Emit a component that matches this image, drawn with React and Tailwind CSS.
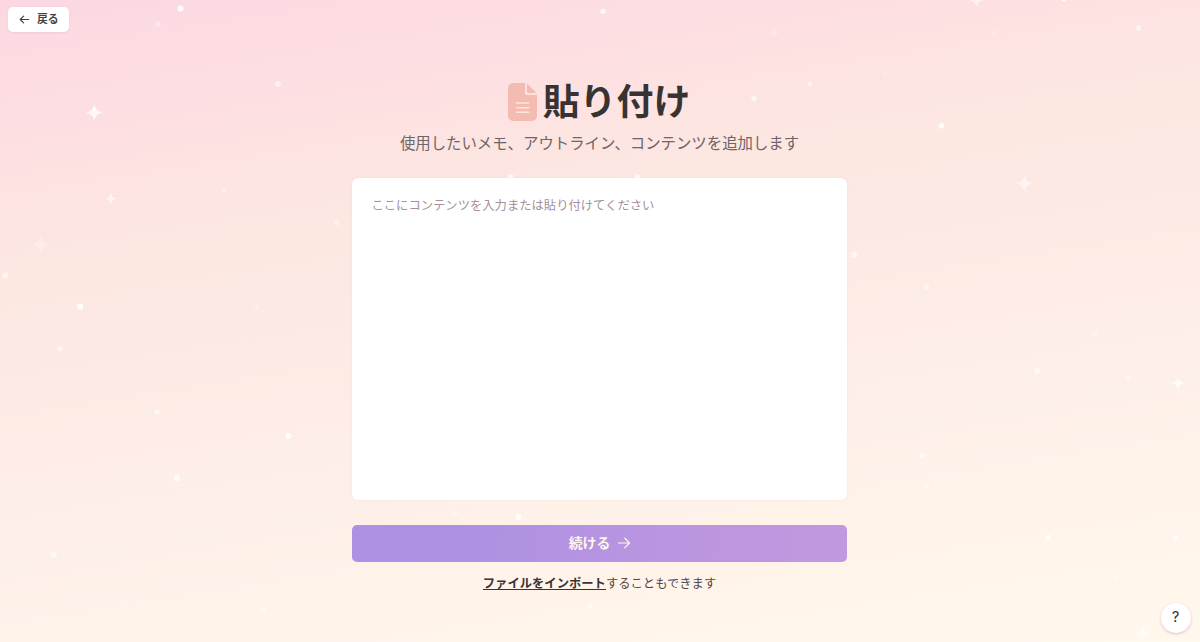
import React from "react";

const dots = [
  [180.5, 8.5, 3, 0.85], [158, 24, 2.6, 0.4], [278, 84, 2.8, 0.6], [224, 190, 2.6, 0.35],
  [603, 11.5, 2.8, 0.7], [754, 98.5, 2.8, 0.6], [810, 84, 2.6, 0.5], [941.5, 125.7, 2.8, 0.9],
  [885, 74.5, 2.4, 0.2], [994, 33, 2.4, 0.2], [1138.5, 28, 3, 0.55], [1064, -1, 2.6, 0.7],
  [854.5, 255, 3, 0.6], [926.3, 287, 2.8, 0.5], [510.5, 177, 2.8, 0.8], [637.5, 177, 2.8, 0.8],
  [5.3, 275.5, 2.9, 0.6], [80.2, 306.6, 3.1, 1], [59.8, 348.6, 2.7, 0.6], [336.5, 222.6, 2.8, 0.4],
  [257, 307, 2.5, 0.25], [157, 412, 2.8, 0.55], [288.3, 436, 2.9, 0.95], [176.8, 478, 3.1, 0.8],
  [54, 554.5, 2.9, 0.55], [263.5, 609, 2.7, 0.5], [123, 608, 2.5, 0.2], [518.5, 517, 2.9, 0.9],
  [1037.3, 371, 2.9, 0.6], [1128.5, 378, 2.7, 0.4], [1095.5, 333.5, 2.7, 0.3], [922.5, 456, 2.7, 0.5],
  [926.5, 486.3, 2.7, 0.5], [1048.3, 537.7, 2.9, 0.85], [1175.5, 537.7, 2.8, 0.7], [590, 606, 2.6, 0.6],
];

const sparkles = [
  [94.3, 112.5, 8.5, 1.3, 0.75],
  [111, 198.5, 7, 0.1, 0.65],
  [40.5, 244.5, 9, 1, 0.3],
  [774, 33, 6, 0.4, 0.25],
  [976.5, 0, 7.5, 0.9, 0.6],
  [1024.3, 183.5, 8.5, 1.3, 0.5],
  [1178, 383, 7.5, 0.1, 0.85],
  [1143, 633, 7.5, 0.6, 0.65],
  [1116, 578, 6, 0.4, 0.35],
  [455, 514, 5, 0.4, 0.4],
];

function sparklePath(x, y, r, k) {
  return `M${x} ${y - r}Q${x + k} ${y - k} ${x + r} ${y}Q${x + k} ${y + k} ${x} ${y + r}Q${x - k} ${y + k} ${x - r} ${y}Q${x - k} ${y - k} ${x} ${y - r}Z`;
}

function StarField() {
  return (
    <svg aria-hidden="true" className="pointer-events-none absolute inset-0" width="1200" height="642" viewBox="0 0 1200 642" fill="#fff">
      {dots.map(([x, y, r, o]) => (
        <circle key={`${x}-${y}`} cx={x} cy={y} r={r} opacity={o} />
      ))}
      {sparkles.map(([x, y, r, k, o]) => (
        <path key={`${x}-${y}`} d={sparklePath(x, y, r, k)} opacity={o} />
      ))}
    </svg>
  );
}

function ArrowIcon({ className, left = false }) {
  return (
    <svg className={className} viewBox="0 0 12 12" fill="none" stroke="currentColor" strokeLinecap="round" strokeLinejoin="round">
      {left ? <path d="M10.5 6H1.500M5 2.300L1.300 6 5 9.700" /> : <path d="M0.500 6h11M6.700 1.200L11.500 6l-4.800 4.800" />}
    </svg>
  );
}

function DocumentIcon() {
  return (
    <svg className="h-[38px] w-[29px] shrink-0" viewBox="0 0 29 38">
      <path fill="#f4bcb0" d="M5 0h12v9.500A2.500 2.500 0 0 0 19.500 12H29v21a5 5 0 0 1-5 5H5a5 5 0 0 1-5-5V5a5 5 0 0 1 5-5Z" />
      <path fill="#f4bcb0" d="M19 .5 28.500 10h-8A1.500 1.500 0 0 1 19 8.500Z" />
      <path stroke="#fde5e1" strokeWidth="1.500" strokeLinecap="round" d="M8.500 20h12.200M8.500 24.700h12.200M8.500 29.300h12.200" />
    </svg>
  );
}

export default function App() {
  return (
    <div className="relative flex h-[642px] w-full flex-col overflow-hidden bg-[linear-gradient(171deg,#fbd8e1_0%,#fddfe2_17%,#fde3e1_24%,#fce7e1_33%,#fdeae4_48%,#fdeee7_60%,#fff3ea_80%,#fff8ed_100%)] font-['Noto_Sans_CJK_JP',sans-serif] text-[#3a3335]">
      <StarField />
      <header className="relative flex h-8 items-end pl-2">
        <button className="flex h-[25px] w-[61px] items-center gap-[7px] rounded-[5px] bg-white pl-[11px] text-[10.8px] font-bold text-[#4a3f43] shadow-[0_1px_2px_rgba(190,120,170,0.15)]">
          <ArrowIcon left className="size-[11px] stroke-[1.300]" />
          <span className="-mt-0.5 leading-none">戻る</span>
        </button>
      </header>

      <main className="relative ml-[352px] flex w-[495px] flex-col items-center pt-12">
        <h1 className="flex h-11 items-center gap-1.5 pr-px text-[36.9px] leading-[44px] font-bold text-[#383332]">
          <DocumentIcon />
          <span className="-mt-1.5">貼り付け</span>
        </h1>
        <p className="mt-[5px] text-[15.4px] leading-[26px] text-[#6f6467]">使用したいメモ、アウトライン、コンテンツを追加します</p>
        <textarea
          className="mt-[22.500px] block h-[322.500px] w-full resize-none rounded-md bg-white px-[19.500px] py-[18.500px] text-[12.32px] leading-[18px] shadow-[0_0_2px_rgba(190,120,120,0.16)] outline-none placeholder:text-[#a58f9b]"
          placeholder="ここにコンテンツを入力または貼り付けてください"
        />
        <button className="mt-[25px] flex h-[37px] w-full items-center justify-center gap-2 rounded-[5px] bg-[linear-gradient(100deg,#ae91e3_0%,#ae91e3_25%,#be96df_75%,#c098df_100%)] pb-px text-[13.86px] font-bold text-[#fff5ef]">
          <span className="-mt-0.5 leading-5">続ける</span>
          <ArrowIcon className="size-3 stroke-[1.200]" />
        </button>
        <p className="mt-3 text-[12.32px] leading-[18px] text-[#514549]">
          <a href="#" className="inline-block h-[16px] border-b border-[#3a3335] leading-[18px] font-bold text-[#3a3335]">ファイルをインポート</a>することもできます
        </p>
      </main>

      <button className="absolute right-[9.500px] bottom-[9.500px] flex size-[30px] items-center justify-center rounded-full bg-white pb-px font-[Inter,sans-serif] text-[15px] font-normal text-[#3a3335] shadow-[0_1px_3px_rgba(190,100,130,0.4)]">
        ?
      </button>
    </div>
  );
}
